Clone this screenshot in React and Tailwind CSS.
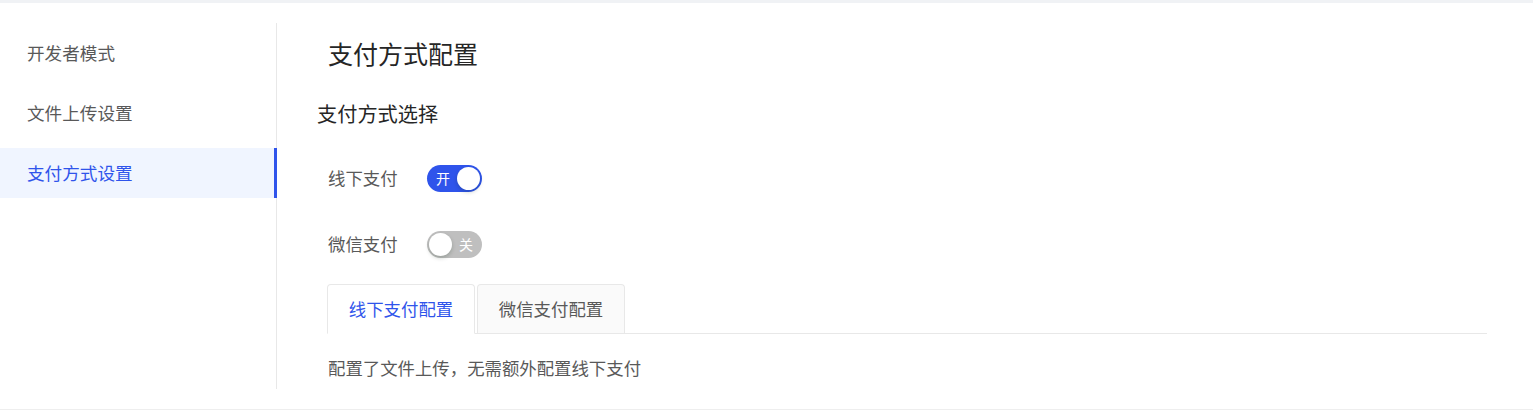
export default function App() {
  const font = { fontFamily: '"Noto Sans CJK SC", "Noto Sans", sans-serif' };
  return (
    <div className="w-full h-[411px] bg-white flex flex-col overflow-hidden" style={font}>
      <div className="h-[3px] bg-[#f0f2f5] shrink-0" />
      <div className="h-[406px] flex shrink-0">
        <div className="w-[277px] mt-[20px] h-[366px] border-r border-[#e8e8e8] flex flex-col gap-[10px] pt-[5px] shrink-0">
          <div className="h-[50px] flex items-center pl-[27px] text-[17.6px] text-[#595959]">开发者模式</div>
          <div className="h-[50px] flex items-center pl-[27px] text-[17.6px] text-[#595959]">文件上传设置</div>
          <div className="h-[50px] flex items-center pl-[27px] text-[17.6px] text-[#2f54eb] bg-[#f0f5ff] border-r-[3px] border-[#2f54eb] -mr-px">支付方式设置</div>
        </div>
        <div className="flex-1 pl-[40px] pr-[46px] flex flex-col">
          <div className="mt-[33px] ml-[11px] h-[34px] leading-[34px] text-[25px] text-[#262626]">支付方式配置</div>
          <div className="mt-[30px] h-[28px] leading-[28px] text-[20.2px] text-[#262626]">支付方式选择</div>
          <div className="mt-[36px] ml-[11px] h-[28px] flex items-center">
            <span className="text-[17.4px] text-[#595959] leading-[28px] w-[99px]">线下支付</span>
            <div className="w-[55px] h-[27px] rounded-full bg-[#2f54eb] flex items-center justify-between pl-[9px] pr-[2px]">
              <span className="text-[14px] text-white leading-none">开</span>
              <span className="w-[23px] h-[23px] rounded-full bg-white shadow-[0_2px_4px_rgba(0,35,11,0.2)]" />
            </div>
          </div>
          <div className="mt-[38px] ml-[11px] h-[28px] flex items-center">
            <span className="text-[17.4px] text-[#595959] leading-[28px] w-[99px]">微信支付</span>
            <div className="w-[55px] h-[27px] rounded-full bg-[#bfbfbf] flex items-center justify-between pl-[2px] pr-[9px]">
              <span className="w-[23px] h-[23px] rounded-full bg-white shadow-[0_2px_4px_rgba(0,35,11,0.2)]" />
              <span className="text-[14px] text-white leading-none">关</span>
            </div>
          </div>
          <div className="mt-[26px] ml-[10px] h-[50px] flex items-end gap-[2px] border-b border-[#e8e8e8]">
            <div className="w-[148px] h-[50px] -mb-px border border-[#e8e8e8] border-b-white bg-white rounded-t-[4px] flex items-center justify-center text-[17.4px] text-[#2f54eb]">线下支付配置</div>
            <div className="w-[148px] h-[49px] border border-[#e8e8e8] border-b-0 bg-[#fafafa] rounded-t-[4px] flex items-center justify-center text-[17.4px] text-[#595959]">微信支付配置</div>
          </div>
          <div className="mt-[22px] ml-[11px] h-[24px] leading-[24px] text-[17.4px] text-[#595959]">配置了文件上传，无需额外配置线下支付</div>
        </div>
      </div>
      <div className="h-px bg-[#eeeeee] shrink-0" />
      <div className="h-px bg-white shrink-0" />
    </div>
  );
}
